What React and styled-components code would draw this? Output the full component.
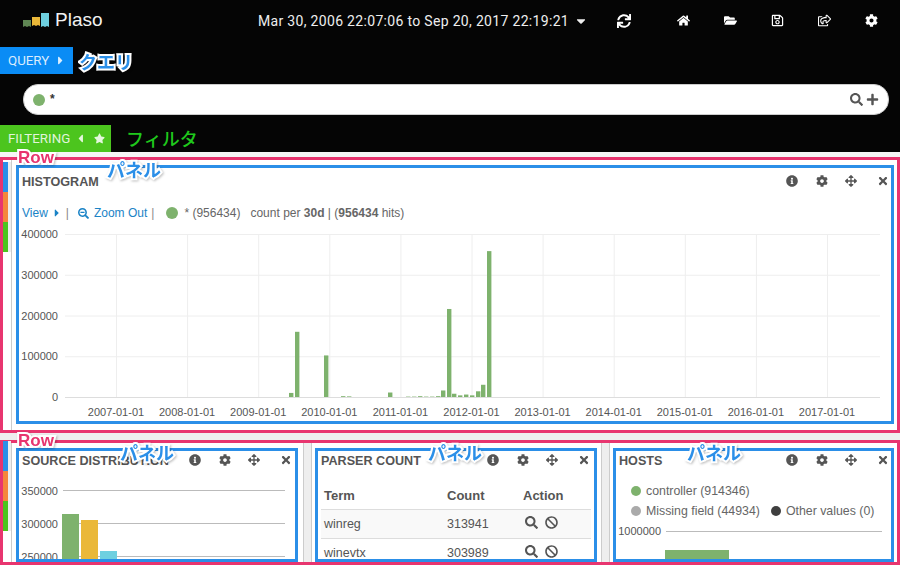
import React from "react";
import styled, { createGlobalStyle } from "styled-components";
import {
  FaSync,
  FaHome,
  FaFolderOpen,
  FaRegSave,
  FaRegShareSquare,
  FaCog,
  FaInfoCircle,
  FaArrowsAlt,
  FaTimes,
  FaSearch,
  FaPlus,
  FaBan,
  FaStar,
  FaSearchMinus,
  FaCaretRight,
  FaCaretLeft,
  FaCaretDown
} from "react-icons/fa";

const GlobalStyle = createGlobalStyle`
  html, body {
    margin: 0;
    padding: 0;
    height: 565px;
    overflow: hidden;
    background: #eee;
    font-family: "Liberation Sans", Arial, sans-serif;
    color: #555;
  }
`;

const CJK = `"Noto Sans CJK JP", "Liberation Sans", sans-serif`;

const halo = color => `
  -webkit-text-stroke: 4px ${color};
  paint-order: stroke fill;
  filter: drop-shadow(1px 1px 1px rgba(0, 0, 0, 0.25));
`;

const Page = styled.div`
  width: 900px;
  height: 565px;
  overflow: hidden;
  display: flex;
  flex-direction: column;
`;

const Header = styled.header`
  background: #050505;
  height: 152px;
  flex: none;
  display: flex;
  flex-direction: column;
`;

const Nav = styled.nav`
  height: 40px;
  display: flex;
  align-items: center;
  padding: 0 0 0 23px;
  color: #fff;
`;

const Brand = styled.div`
  display: flex;
  align-items: center;
  gap: 6px;
  width: 235px;
  font-size: 19px;
  color: #f2f2f2;
`;

const TimeRange = styled.div`
  display: flex;
  align-items: center;
  gap: 5px;
  width: 359px;
  margin-top: 2px;
  font-family: Roboto, sans-serif;
  font-size: 14px;
  letter-spacing: 0.32px;
  color: #eee;
`;

const NavIcons = styled.div`
  display: flex;
  align-items: center;
  margin-left: 29px;
`;

const RefreshBtn = styled.span`
  display: flex;
  font-size: 14px;
  margin-top: 2px;
`;

const NavIcon = styled.span`
  display: flex;
  justify-content: center;
  width: 47px;
  font-size: 13px;
`;

const LabelRow = styled.div`
  display: flex;
  align-items: center;
  height: 27px;
  margin-top: ${props => props.$top}px;
`;

const Tag = styled.div`
  height: 27px;
  width: ${props => props.$width}px;
  box-sizing: border-box;
  padding-left: 8px;
  background: ${props => props.$bg};
  color: rgba(255, 255, 255, 0.85);
  display: flex;
  align-items: center;
  gap: ${props => props.$gap}px;
  font-family: Roboto, sans-serif;
  font-size: 13.3px;
`;

const TagStar = styled(FaStar)`
  margin-left: 3px;
`;

const QueryNote = styled.span`
  margin-left: 6px;
  font-family: ${CJK};
  font-weight: 700;
  font-size: 18px;
  color: #2b8fe8;
  ${halo("#fff")}
`;

const FilterNote = styled.span`
  margin: -2px 0 0 15px;
  font-family: ${CJK};
  font-weight: 500;
  font-size: 18px;
  color: #1fc81c;
`;

const SearchWrap = styled.div`
  margin: 10px 11px 10px 23px;
  height: 31px;
  box-sizing: border-box;
  background: #fff;
  border: 1px solid #ccc;
  border-radius: 15px;
  display: flex;
  align-items: center;
  padding: 0 9px 0 9px;
`;

const Dot = styled.span`
  display: inline-block;
  flex: none;
  width: ${props => props.$size || 12}px;
  height: ${props => props.$size || 12}px;
  border-radius: 50%;
  background: ${props => props.$color || "#7eb26d"};
`;

const QueryText = styled.div`
  flex: 1;
  margin-left: 5px;
  margin-top: -2px;
  font-size: 12px;
  font-weight: 700;
  color: #333;
`;

const SearchIcons = styled.div`
  display: flex;
  align-items: center;
  gap: 3px;
  font-size: 13px;
  color: #555;
`;

const Content = styled.main`
  flex: 1;
  padding-top: 5px;
  background: linear-gradient(#f6f6f6 5px, #eee 5px);
  display: flex;
  flex-direction: column;
  gap: 7px;
`;

const Row = styled.section`
  position: relative;
  flex: none;
  height: ${props => props.$height}px;
  box-sizing: border-box;
  border: 3px solid #e8356f;
  display: flex;
  background: #fff;
`;

const RowNote = styled.span`
  position: absolute;
  left: 15px;
  top: -11px;
  z-index: 2;
  font-weight: 700;
  font-size: 17px;
  line-height: 18px;
  color: #e8356f;
  ${halo("#fff")}
`;

const RowStrip = styled.div`
  flex: none;
  width: 8px;
  height: 90px;
  margin-top: ${props => props.$top}px;
  background: #eee;
`;

const Swatch = styled.div`
  width: 5px;
  height: 30px;
  background: ${props => props.$color};
`;

const Columns = styled.div`
  flex: 1;
  min-width: 0;
  display: flex;
  gap: 7px;
  background: #eee;
  border-left: 1px solid #ccc;
`;

const Column = styled.div`
  flex: none;
  width: ${props => props.$width}px;
  box-sizing: border-box;
  padding: 5px ${props => props.$right}px 0 ${props => (props.$first ? 4 : 3)}px;
  background: #fff;
  border-right: ${props => (props.$last ? "none" : "1px solid #ccc")};
  border-left: ${props => (props.$first ? "none" : "1px solid #ccc")};
`;

const Panel = styled.div`
  position: relative;
  height: ${props => props.$height}px;
  box-sizing: border-box;
  border: 3px solid #2b8fe8;
  background: #fff;
`;

const PanelBody = styled.div`
  height: 100%;
  overflow: hidden;
`;

const PanelNote = styled.span`
  position: absolute;
  top: -9px;
  left: ${props => props.$left}px;
  z-index: 2;
  font-family: ${CJK};
  font-weight: 700;
  font-size: 18px;
  line-height: 20px;
  color: #2b8fe8;
  ${halo("#fff")}
`;

const PanelHead = styled.div`
  display: flex;
  align-items: center;
  height: ${props => props.$height}px;
  padding: 0 ${props => props.$right || 2}px 0 3px;
`;

const PanelTitle = styled.h2`
  flex: 1;
  margin: 1px 0 0;
  font-size: 12.6px;
  font-weight: 700;
  color: #555;
  white-space: nowrap;
`;

const Tools = styled.div`
  display: flex;
  align-items: center;
  flex: none;
  font-size: 12px;
  color: #555;
`;

const Tool = styled.span`
  display: flex;
  justify-content: center;
  width: 12px;
  margin-left: ${props => props.$gap}px;
`;

const ChartBar = styled.div`
  display: flex;
  align-items: center;
  height: 14px;
  margin-top: 12px;
  padding-left: 3px;
  font-size: 12px;
  color: #666;
  white-space: nowrap;
`;

const Link = styled.a`
  display: inline-flex;
  align-items: center;
  gap: ${props => props.$gap || 3}px;
  color: #1a83c6;
`;

const Sep = styled.span`
  margin: 0 ${props => props.$right}px 0 ${props => props.$left || 3}px;
  color: #888;
`;

const ChartStat = styled.span`
  margin-left: 6px;
`;

const ChartSvg = styled.svg`
  display: block;
  margin-top: ${props => props.$top || 0}px;
`;

const AxisText = styled.text`
  font-family: "Liberation Sans", Arial, sans-serif;
  font-size: 11px;
  fill: #555;
`;

const Table = styled.table`
  width: 270px;
  table-layout: fixed;
  margin: 12px 0 0 3px;
  border-collapse: collapse;
  font-size: 13px;
  color: #555;
`;

const Th = styled.th`
  height: 28px;
  padding: 0 0 0 3px;
  text-align: left;
  font-weight: 700;
  width: ${props => props.$width}px;
`;

const Td = styled.td`
  height: 28px;
  padding: 0 0 0 3px;
  border-top: 1px solid #ddd;
  background: ${props => (props.$odd ? "#f9f9f9" : "#fff")};
  font-size: 12.5px;
`;

const ActionIcons = styled.span`
  display: inline-flex;
  align-items: center;
  gap: 7px;
  margin-left: 2px;
  font-size: 13px;
  color: #555;
`;

const Legend = styled.div`
  padding: 12px 0 0 15px;
  font-size: 12.35px;
  color: #666;
`;

const LegendRow = styled.div`
  display: flex;
  align-items: center;
  height: 20px;
`;

const LegendItem = styled.span`
  display: inline-flex;
  align-items: center;
  gap: 5px;
  margin-right: 11px;
  white-space: nowrap;
`;

const Logo = () => (
  <svg width="26" height="16" viewBox="0 0 26 16">
    <path d="M0 8h8v7l-2-1-2 1-2-1-2 1z" fill="#7eb26d" opacity="0.75" />
    <path d="M9 5h8v9l-2-1-2 1-2-1-2 1z" fill="#eab839" />
    <path d="M18 1h8v14l-2-1-2 1-2-1-2 1z" fill="#6ed0e0" />
  </svg>
);

const PanelTools = () => (
  <Tools>
    <Tool $gap={0}><FaInfoCircle /></Tool>
    <Tool $gap={18}><FaCog /></Tool>
    <Tool $gap={17}><FaArrowsAlt /></Tool>
    <Tool $gap={20}><FaTimes /></Tool>
  </Tools>
);

// bar x and value for the 30 day histogram
const histBars = [
  [289, 10000], [295, 160000], [324, 102000], [341, 2000], [347, 1500], [388, 11000],
  [406, 1000], [412, 1000], [418, 2000], [424, 1000], [430, 1000], [436, 2000],
  [441, 16000], [447, 216000], [452, 8000], [458, 4000], [464, 6000], [470, 4000],
  [476, 14000], [481, 30000], [487, 358000]
];
const years = [2007, 2008, 2009, 2010, 2011, 2012, 2013, 2014, 2015, 2016, 2017];
const yearX = y => 116 + (y - 2007) * 71.1;
const histY = v => 397 - (v / 400000) * 163;

const Histogram = () => (
  <ChartSvg $top={6} width="875" height="192" viewBox="19 226 875 192">
    {[0, 100000, 200000, 300000, 400000].map(v => (
      <g key={v}>
        <line x1="65" x2="880" y1={histY(v) + 0.5} y2={histY(v) + 0.5} stroke={v === 0 ? "#ddd" : "#eee"} />
        <AxisText x="58" y={histY(v) + 4} textAnchor="end">{v}</AxisText>
      </g>
    ))}
    {years.map(y => (
      <g key={y}>
        <line x1={yearX(y) + 0.5} x2={yearX(y) + 0.5} y1="234" y2="397" stroke="#eee" />
        <AxisText x={yearX(y)} y="416" textAnchor="middle">{y}-01-01</AxisText>
      </g>
    ))}
    {histBars.map(([x, v]) => (
      <rect key={x} x={x} y={histY(v)} width="4.4" height={397 - histY(v)} fill="#7eb26d" />
    ))}
  </ChartSvg>
);

const SourceChart = () => (
  <ChartSvg $top={12} width="276" height="82" viewBox="19 481 276 82">
    {[[350000, 491], [300000, 524], [250000, 557]].map(([v, y]) => (
      <g key={v}>
        <line x1="63" x2="285" y1={y - 0.5} y2={y - 0.5} stroke="#bbb" />
        <AxisText x="58" y={y + 4} textAnchor="end">{v}</AxisText>
      </g>
    ))}
    <rect x="62" y="514" width="17" height="50" fill="#7eb26d" />
    <rect x="81" y="520" width="17" height="44" fill="#eab839" />
    <rect x="100" y="551" width="17" height="13" fill="#6ed0e0" />
  </ChartSvg>
);

const HostsChart = () => (
  <ChartSvg width="274" height="42" viewBox="616 521 274 42">
    <line x1="666" x2="882" y1="531.5" y2="531.5" stroke="#bbb" />
    <AxisText x="661" y="535" textAnchor="end">1000000</AxisText>
    <rect x="665" y="550" width="64" height="14" fill="#7eb26d" />
  </ChartSvg>
);

const parserRows = [
  { term: "winreg", count: 313941 },
  { term: "winevtx", count: 303989 }
];

const StripColors = ({ top }) => (
  <RowStrip $top={top}>
    <Swatch $color="#2b8fe8" />
    <Swatch $color="#f5863b" />
    <Swatch $color="#4cc51e" />
  </RowStrip>
);

export default function App() {
  return (
    <Page>
      <GlobalStyle />
      <Header>
        <Nav>
          <Brand>
            <Logo />
            Plaso
          </Brand>
          <TimeRange>
            Mar 30, 2006 22:07:06 to Sep 20, 2017 22:19:21
            <FaCaretDown size={14} />
          </TimeRange>
          <RefreshBtn><FaSync /></RefreshBtn>
          <NavIcons>
            <NavIcon><FaHome /></NavIcon>
            <NavIcon><FaFolderOpen /></NavIcon>
            <NavIcon><FaRegSave /></NavIcon>
            <NavIcon><FaRegShareSquare /></NavIcon>
            <NavIcon><FaCog /></NavIcon>
          </NavIcons>
        </Nav>
        <LabelRow $top={7}>
          <Tag $width={73} $bg="#0a8cf5" $gap={5}>
            QUERY <FaCaretRight size={13} />
          </Tag>
          <QueryNote>クエリ</QueryNote>
        </LabelRow>
        <SearchWrap>
          <Dot />
          <QueryText>*</QueryText>
          <SearchIcons>
            <FaSearch />
            <FaPlus />
          </SearchIcons>
        </SearchWrap>
        <LabelRow $top={0}>
          <Tag $width={111} $bg="#4cc51e" $gap={4}>
            FILTERING <FaCaretLeft size={13} /> <TagStar size={11} />
          </Tag>
          <FilterNote>フィルタ</FilterNote>
        </LabelRow>
      </Header>

      <Content>
        <Row $height={276}>
          <RowNote>Row</RowNote>
          <StripColors top={2} />
          <Columns>
            <Column $width={885} $first $last $right={3}>
              <Panel $height={259}>
                <PanelNote $left={88}>パネル</PanelNote>
                <PanelBody>
                  <PanelHead $height={26}>
                    <PanelTitle>HISTOGRAM</PanelTitle>
                    <PanelTools />
                  </PanelHead>
                  <ChartBar>
                    <Link>View <FaCaretRight size={12} /></Link>
                    <Sep $right={9}>|</Sep>
                    <Link $gap={5}><FaSearchMinus size={11} /> Zoom Out</Link>
                    <Sep $left={4} $right={12}>|</Sep>
                    <Dot />
                    <ChartStat>* (956434) &nbsp; count per <b>30d</b> | (<b>956434</b> hits)</ChartStat>
                  </ChartBar>
                  <Histogram />
                </PanelBody>
              </Panel>
            </Column>
          </Columns>
        </Row>

        <Row $height={125}>
          <RowNote>Row</RowNote>
          <StripColors top={-2} />
          <Columns>
            <Column $width={292} $first $right={5}>
              <Panel $height={114}>
                <PanelNote $left={101}>パネル</PanelNote>
                <PanelBody>
                  <PanelHead $height={18} $right={3}>
                    <PanelTitle>SOURCE DISTRIBUTION</PanelTitle>
                    <PanelTools />
                  </PanelHead>
                  <SourceChart />
                </PanelBody>
              </Panel>
            </Column>
            <Column $width={291} $right={4}>
              <Panel $height={114}>
                <PanelNote $left={110}>パネル</PanelNote>
                <PanelBody>
                  <PanelHead $height={18} $right={4}>
                    <PanelTitle>PARSER COUNT</PanelTitle>
                    <PanelTools />
                  </PanelHead>
                  <Table>
                    <thead>
                      <tr>
                        <Th $width={120}>Term</Th>
                        <Th $width={73}>Count</Th>
                        <Th $width={68}>Action</Th>
                      </tr>
                    </thead>
                    <tbody>
                      {parserRows.map((r, i) => (
                        <tr key={r.term}>
                          <Td $odd={i === 0}>{r.term}</Td>
                          <Td $odd={i === 0}>{r.count}</Td>
                          <Td $odd={i === 0}>
                            <ActionIcons><FaSearch /><FaBan /></ActionIcons>
                          </Td>
                        </tr>
                      ))}
                    </tbody>
                  </Table>
                </PanelBody>
              </Panel>
            </Column>
            <Column $width={288} $last $right={3}>
              <Panel $height={114}>
                <PanelNote $left={71}>パネル</PanelNote>
                <PanelBody>
                  <PanelHead $height={18}>
                    <PanelTitle>HOSTS</PanelTitle>
                    <PanelTools />
                  </PanelHead>
                  <Legend>
                    <LegendRow>
                      <LegendItem><Dot $size={10} />controller (914346)</LegendItem>
                    </LegendRow>
                    <LegendRow>
                      <LegendItem><Dot $size={10} $color="#aaa" />Missing field (44934)</LegendItem>
                      <LegendItem><Dot $size={10} $color="#3f3f3f" />Other values (0)</LegendItem>
                    </LegendRow>
                  </Legend>
                  <HostsChart />
                </PanelBody>
              </Panel>
            </Column>
          </Columns>
        </Row>
      </Content>
    </Page>
  );
}
